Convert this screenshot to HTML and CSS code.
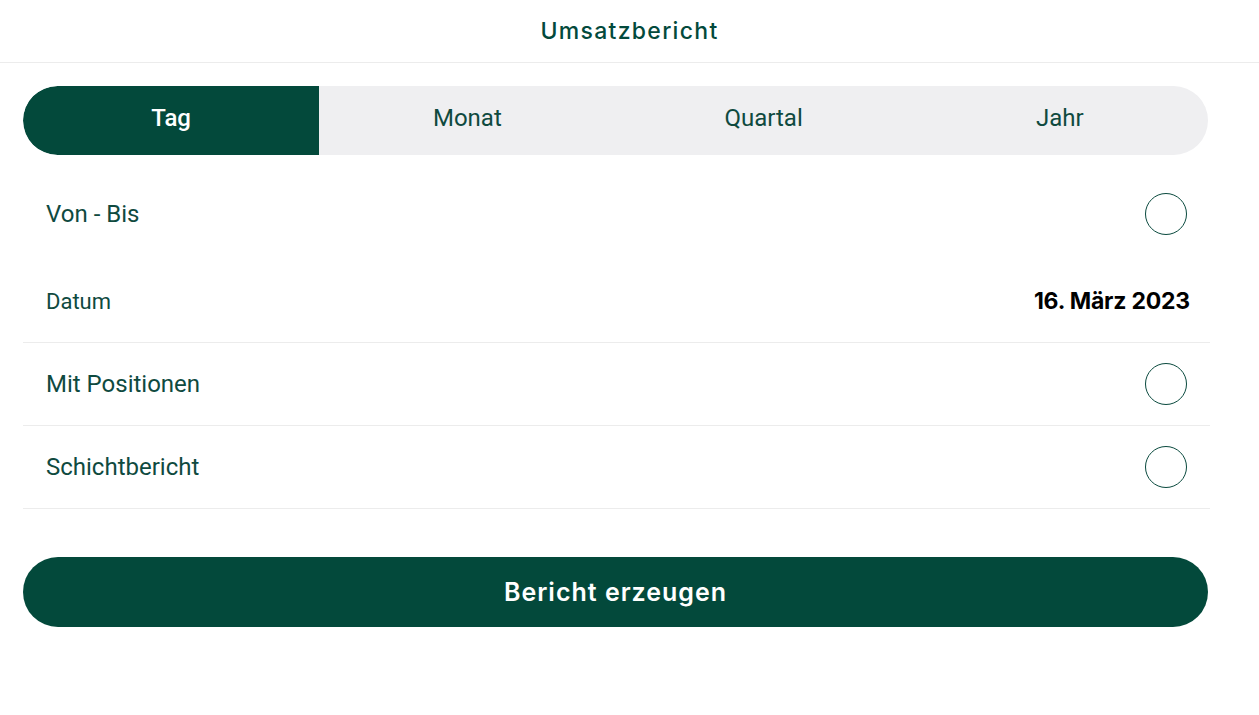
FILE: index.html
```html
<!DOCTYPE html>
<html lang="de">
<head>
<meta charset="utf-8">
<title>Umsatzbericht</title>
<link rel="stylesheet" href="styles.css">
</head>
<body>
<header class="header">
  <h1 class="title">Umsatzbericht</h1>
</header>
<main class="content">
  <div class="tabs">
    <div class="tab active">Tag</div>
    <div class="tab">Monat</div>
    <div class="tab">Quartal</div>
    <div class="tab">Jahr</div>
  </div>
  <div class="list">
    <div class="row first">
      <span class="label">Von - Bis</span>
      <span class="radio"></span>
    </div>
    <div class="row bordered">
      <span class="label small">Datum</span>
      <span class="date">16. März 2023</span>
    </div>
    <div class="row bordered">
      <span class="label">Mit Positionen</span>
      <span class="radio"></span>
    </div>
    <div class="row bordered">
      <span class="label">Schichtbericht</span>
      <span class="radio"></span>
    </div>
  </div>
  <button class="submit">Bericht erzeugen</button>
</main>
</body>
</html>
```
FILE: styles.css
```css
* { box-sizing: border-box; }
body {
  margin: 0;
  background: #ffffff;
  font-family: Roboto, "Liberation Sans", sans-serif;
  color: #0a4a3e;
}
.header {
  height: 63px;
  border-bottom: 1px solid #ececec;
  display: flex;
  align-items: center;
  justify-content: center;
}
.title {
  margin: 0;
  font-family: Inter, "DejaVu Sans", sans-serif;
  font-weight: 500;
  font-size: 23px;
  letter-spacing: 1.3px;
  color: #034a3c;
  padding-bottom: 1px;
}
.content {
  padding: 23px 49px 0 23px;
}
.tabs {
  display: grid;
  grid-template-columns: repeat(4, 1fr);
  width: 1185px;
  height: 69px;
  background: #efeff1;
  border-radius: 35px;
  overflow: hidden;
}
.tab {
  display: flex;
  align-items: center;
  justify-content: center;
  font-size: 24px;
  color: #0f4a3f;
  padding-bottom: 5px;
}
.tab.active {
  background: #03493b;
  color: #ffffff;
  font-weight: 500;
  border-radius: 35px 0 0 35px;
}
.list {
  margin-top: 17px;
  width: 1187px;
}
.row {
  height: 83px;
  display: flex;
  align-items: center;
  justify-content: space-between;
  padding: 0 23px;
}
.row.first {
  height: 88px;
  padding-bottom: 4px;
}
.row.bordered {
  border-bottom: 1px solid #ececec;
}
.label {
  font-size: 24px;
  color: #0f4a3f;
}
.label.small {
  font-size: 22px;
}
.radio {
  width: 42px;
  height: 42px;
  border: 1px solid #0a4a3e;
  border-radius: 50%;
}
.date {
  font-family: Inter, "DejaVu Sans", sans-serif;
  font-weight: 700;
  font-size: 23px;
  color: #000000;
  letter-spacing: -0.2px;
  margin-right: -3px;
}
.submit {
  display: flex;
  align-items: center;
  justify-content: center;
  margin-top: 48px;
  width: 1185px;
  height: 70px;
  border: none;
  border-radius: 35px;
  background: #03493b;
  color: #ffffff;
  font-family: Inter, "DejaVu Sans", sans-serif;
  font-weight: 600;
  font-size: 25px;
  letter-spacing: 1px;
  padding-bottom: 2px;
}
```
